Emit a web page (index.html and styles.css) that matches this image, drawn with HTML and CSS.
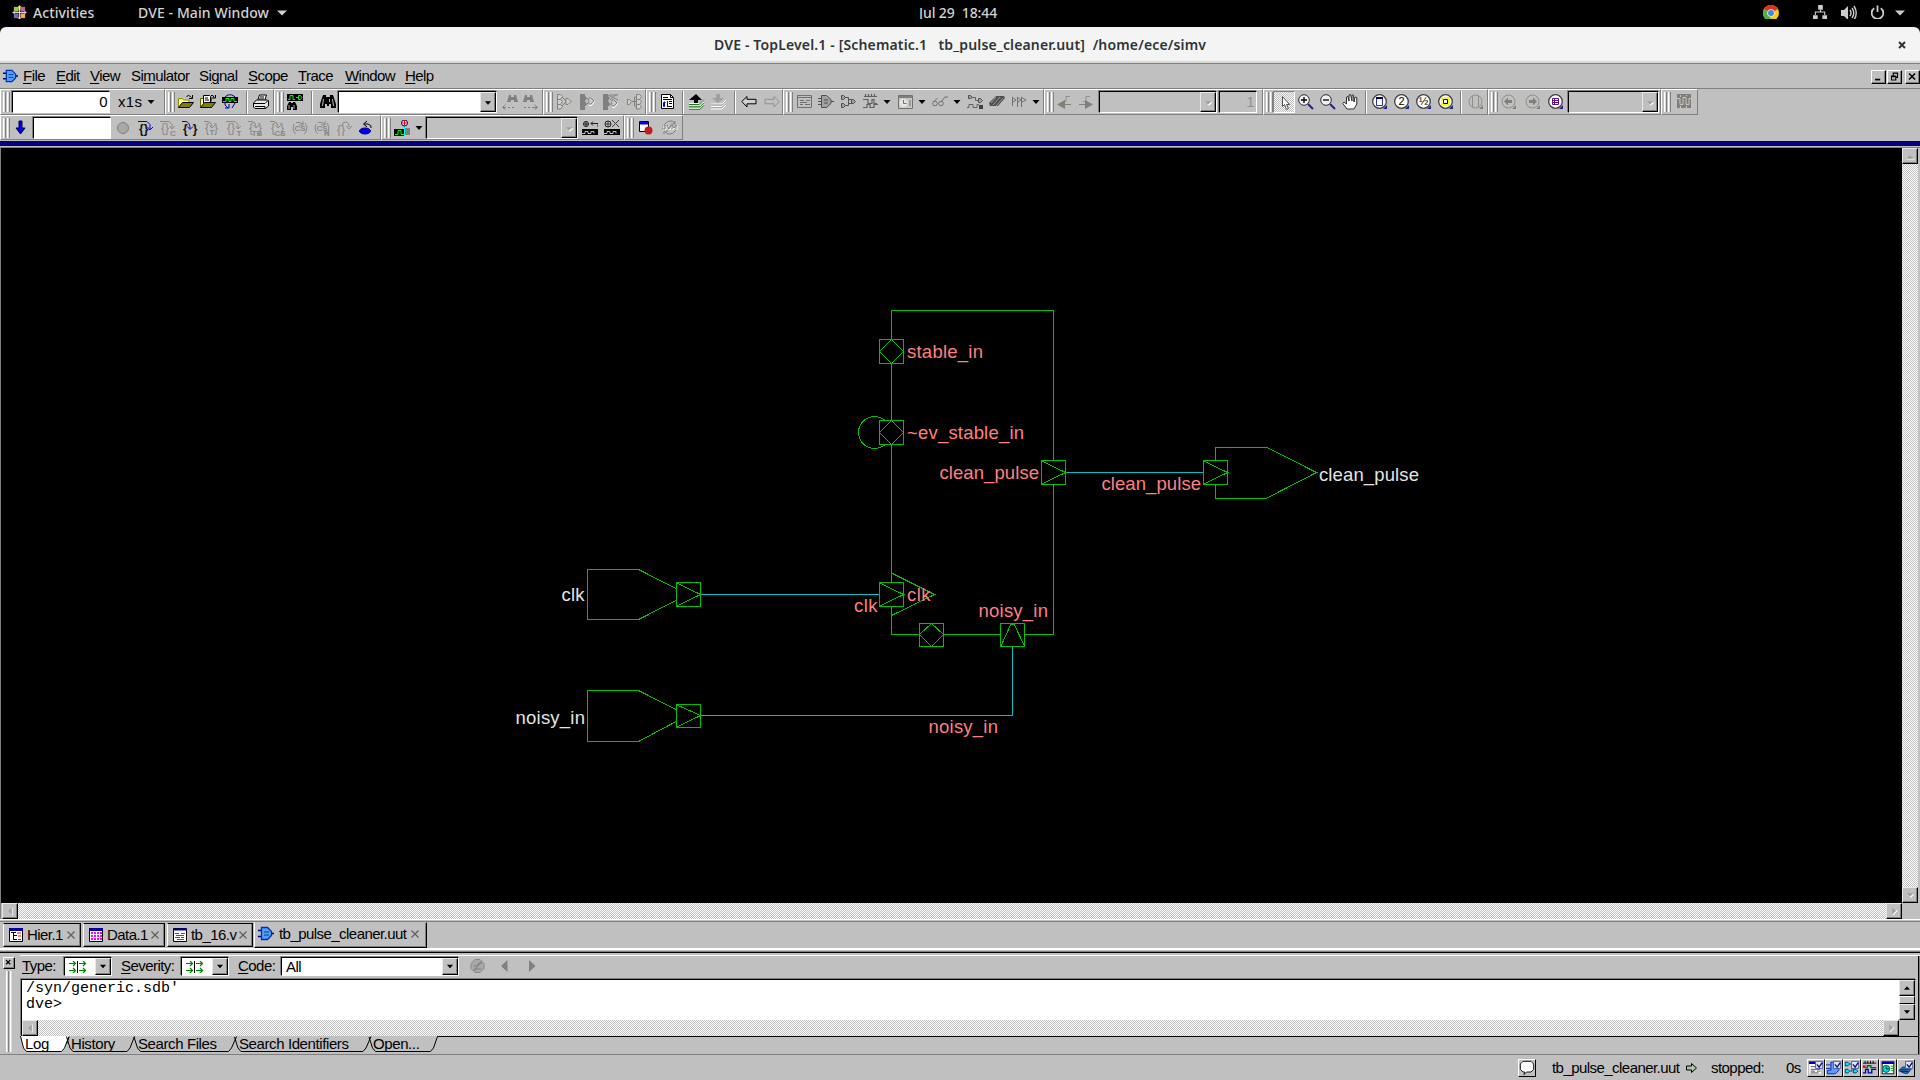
FILE: index.html
```html
<!DOCTYPE html>
<html lang="en">
<head>
<meta charset="utf-8">
<title>DVE - TopLevel.1</title>
<link rel="stylesheet" href="styles.css">
</head>
<body>
<svg class="sprite" aria-hidden="true">
  <defs>
    <symbol id="dve" viewBox="0 0 16 16"><path d="M0 4.5h4M0 10.5h4M12 7.5h4" stroke="#000090" stroke-width="1.6"/><path d="M3.5 1.5h6l4 4v4l-4 4h-6z" fill="#50a0ff" stroke="#0030a8" stroke-width="1.3"/><path d="M6 6h5M6 9h5" stroke="#004080"/></symbol>
    <symbol id="down" viewBox="0 0 16 16"><path d="M4.5 6h7L8 10z" fill="#000"/></symbol>
    <symbol id="down-off" viewBox="0 0 16 16"><path d="M5 7h8l-4 4z" fill="#fff"/><path d="M4 6h8l-4 4z" fill="#a0a0a0"/></symbol>
    <symbol id="up" viewBox="0 0 16 16"><path d="M4.5 10h7L8 6z" fill="#000"/></symbol>
    <symbol id="up-off" viewBox="0 0 16 16"><path d="M4 11h9v1H4z" fill="#fff"/><path d="M4 11h8L8 7z" fill="#a0a0a0"/></symbol>
    <symbol id="left-off" viewBox="0 0 16 16"><path d="M10 4h1v9h-1z" fill="#fff"/><path d="M10 4v8L6 8z" fill="#a0a0a0"/></symbol>
    <symbol id="right-off" viewBox="0 0 16 16"><path d="M7 13l5-5-1-1-4 4z" fill="#fff"/><path d="M6 4v8l4-4z" fill="#a0a0a0"/></symbol>

    <symbol id="open" viewBox="0 0 16 16"><path d="M.5 13.500V4.500h4l1 1.500h5.500v2" fill="#ffffa0" stroke="#909000"/><path d="M.5 13.500L4.500 8.500H15.500L11.500 13.500z" fill="#808000" stroke="#000"/><path d="M8.500 2.500q2-2 4 0l1 1M14.500 1v3.500H11" fill="none" stroke="#000"/></symbol>
    <symbol id="openfile" viewBox="0 0 16 16"><path d="M.5 13.500V4.500h3v-3h6l2 2v4" fill="#ffffa0" stroke="#606000"/><path d="M3.500 9V1.500h6l1 1V8" fill="#fff" stroke="#000"/><path d="M5 4h3M5 6h4" stroke="#000"/><path d="M.5 13.500L4.500 8.500H15.500L11.500 13.500z" fill="#808000" stroke="#000"/><path d="M11 1.500h2l1 2M15.500 1v3H12" fill="none" stroke="#000"/></symbol>
    <symbol id="wavereload" viewBox="0 0 16 16"><path d="M0 3h16v6H0z"/><path d="M1 7.500h3v-3h3v3h2v-3h3v3h3" fill="none" stroke="#0f0"/><path d="M3 3q4-4 9-1l2 2M3 8v3l3 3M3 14h4v-4M13 9l-3 5" fill="none" stroke="#000090"/></symbol>
    <symbol id="print" viewBox="0 0 16 16"><path d="M4.500 7l2-6h7l-2 6z" fill="#fff" stroke="#000"/><path d="M7 3h4M6 5h5" stroke="#000"/><path d="M.5 9l3-3h11l1 1v5l-3 2.500H2L.5 13z" fill="#e8e8e8" stroke="#000"/><path d="M1 9.500h11l3-3M2 12.500h10v2" fill="none" stroke="#000"/></symbol>
    <symbol id="findwave" viewBox="0 0 16 16"><path d="M0 0h16v7H0z"/><path d="M1 5.500h2v-4h3v4h2M9 3.500h2M11.500 1.500h2l1.500 2-1.500 2h-2z" fill="none" stroke="#0f0"/><path d="M2 8h2v1h2V8h2l2 4v4H6v-3H4v3H0v-4z"/><path d="M2 11v4M7 11v4" stroke="#aaa"/></symbol>
    <symbol id="binoc" viewBox="0 0 16 16"><path d="M3 1h3v2h4V1h3l3 9v4h-5v-4H9v2H7v-2H5v4H0v-4z"/><path d="M3.500 5l-1 7M9.500 5v3M12.500 5l1 7" stroke="#bbb" fill="none"/></symbol>
    <symbol id="findprev" viewBox="0 0 16 16"><path d="M7 1h2v2h3V1h2l2 7h-4V6H9v2H5z" fill="#808080"/><path d="M1 13.500h3M6 13.500h2M10 13.500h2M3.500 10.500l-3 3 3 2" fill="none" stroke="#808080"/></symbol>
    <symbol id="findnext" viewBox="0 0 16 16"><path d="M3 1h2v2h3V1h2l2 7H8V6H5v2H1z" fill="#808080"/><path d="M2 13.500h2M6 13.500h2M10 13.500h5M12.500 10.500l3 3-3 2" fill="none" stroke="#808080"/></symbol>
    <symbol id="tree1" viewBox="0 0 16 16"><path d="M1.500.5h3l2 2-2 3h-3zM1.500 5.500h3l2 2-2 3h-3zM1.500 10.500h3l2 2-2 2.500h-3zM10 4.500h2l3 3-3 3h-2z" fill="#d4d0c8" stroke="#808080"/><path d="M6 3l4 4M6 12l4-4M15 7.500h1" stroke="#808080"/></symbol>
    <symbol id="tree2" viewBox="0 0 16 16"><path d="M0 0h5v2l2 2-2 3 2 3-2 2v4H0z" fill="#808080"/><path d="M9.500 4.500h2l3 3-3 4h-2z" fill="#c8c8c8" stroke="#fff"/><path d="M9 4h2l3 3-3 3H9zM5 3l4 3M5 12l4-4" stroke="#808080" fill="none"/></symbol>
    <symbol id="tree3" viewBox="0 0 16 16"><path d="M0 0h5v2l2 2-2 3 2 3-2 2v4H0z" fill="#808080"/><path d="M9.500 6.500h2l3 3-3 4h-2z" fill="#c8c8c8" stroke="#fff"/><path d="M9 6h2l3 3-3 3H9zM5 12l4-3M5 1l10 5M14 0L7 6M7 1h8" stroke="#808080" fill="none"/></symbol>
    <symbol id="tree4" viewBox="0 0 16 16"><path d="M1.500 5.500h2l2 2-2 3h-2zM10.500.5h3l2 2-2 3h-3zM10.500 5.500h3l2 2-2 3h-3zM10.500 10.500h3l2 2-2 2.500h-3z" fill="#d4d0c8" stroke="#808080"/><path d="M6 7.500h5M8.500 7V3h2M8.500 7v5h2" stroke="#808080" fill="none"/></symbol>
    <symbol id="src" viewBox="0 0 16 16"><path d="M.5.5h9l3 3v11H.5z" fill="#fff" stroke="#000"/><path d="M9.500.5v3h3M2 3.500h5M2 5.500h9M6 12.500h5M8 9.500h3M8 7.500h3" fill="none" stroke="#000"/><path d="M3.500 7.500v5h-1v-4h2M6.500 7v6" fill="none" stroke="#0000e0"/></symbol>
    <symbol id="stackup" viewBox="0 0 16 16"><path d="M7 0l6 6H9v5H5V6H0z"/><path d="M0 9.500h11l4-4M0 12h11l4-4M0 14.500h11l4-4" fill="none" stroke="#fff"/><path d="M0 10.500h10l5-5M0 12.800h11l4-4M0 15.300h11l4-4" fill="none" stroke="#207820"/></symbol>
    <symbol id="stackdn" viewBox="0 0 16 16"><path d="M5 0h4v4h4L7 9 1 4h4z" fill="#a0a0a0"/><path d="M0 10h11l4-4M0 12.500h11l4-4M0 15h11l4-4" fill="none" stroke="#fff"/><path d="M0 11h11l4-4M0 13.500h11l4-4" fill="none" stroke="#a8a8a8"/></symbol>
    <symbol id="back" viewBox="0 0 16 16"><path d="M.8 7.500L6 2.500v2.800h9v4.500H6v3.200z" fill="#d0d0d0" stroke="#000"/></symbol>
    <symbol id="fwd" viewBox="0 0 16 16"><path d="M15.200 7.500L10 2.500v2.800H1v4.500h9v3.200z" fill="none" stroke="#909090"/></symbol>
    <symbol id="list" viewBox="0 0 16 16"><path d="M.5 1.500h14v12H.5zM1 3.500h13M3 6.500h4M9 6.500h4M3 8.500h7M3 10.500h3M8 10.500h5" fill="none" stroke="#707070"/></symbol>
    <symbol id="gate" viewBox="0 0 16 16"><path d="M0 4.500h4M0 7.500h3M0 10.500h4M12 7.500h4" stroke="#505050"/><path d="M3.500 1.500h5l4.500 4v4l-4.500 4h-5z" fill="#a0a0a0" stroke="#505050"/><path d="M6 6h4M6 9h4" stroke="#505050"/></symbol>
    <symbol id="path" viewBox="0 0 16 16"><path d="M1.500 1.500h2l2 2-2 2h-2zM1.500 9.500h2l2 2-2 2h-2zM11.500 5.500h2l2 2-2 2h-2z" fill="#a0a0a0" stroke="#505050"/><path d="M5 3.500h3.500v8H5M8.500 5.500h3M8.500 9.500h3" fill="none" stroke="#505050"/></symbol>
    <symbol id="wave" viewBox="0 0 16 16"><path d="M1 2.500h13M2.500 0v2M5.500 0v2M8.500 0v2M11.500 0v2M0 5.500h5v4h4v-4h2v4h3M0 13.500h4v-3h3v3h4v-3h4" fill="none" stroke="#606060" stroke-width="1.200"/></symbol>
    <symbol id="timer" viewBox="0 0 16 16"><path d="M.5 1.500h14v13H.5z" fill="#c8c8c8" stroke="#707070"/><path d="M1 3h13" stroke="#808080" stroke-width="2"/><circle cx="5.500" cy="9" r="4" fill="#e8e4e0"/><path d="M5.500 6v3.500h3M11 7h2M11 9h2M11 11h2" fill="none" stroke="#707070"/></symbol>
    <symbol id="glasses" viewBox="0 0 16 16"><path d="M1.500 8l4-4M9 8l4-5h3" fill="none" stroke="#707070"/><circle cx="3" cy="9.500" r="2.300" fill="none" stroke="#707070"/><circle cx="9" cy="9.500" r="2.300" fill="none" stroke="#707070"/></symbol>
    <symbol id="pathwave" viewBox="0 0 16 16"><path d="M1.500 1.500h2l2 2-2 1h-2zM11.500 4.500h2l2 2-2 2h-2z" fill="#a0a0a0" stroke="#505050"/><path d="M5 3.500h3.500v3h3M0 13.500h2v-3h4v3h4v-3h2" fill="none" stroke="#606060"/><path d="M12 11h4v4h-4z" fill="#404040"/></symbol>
    <symbol id="chip" viewBox="0 0 16 16"><path d="M0 9l7-7h8l1 2-7 8H1z" fill="#505050"/><path d="M2 9l5-6M4 11l7-8M7 12l7-8" stroke="#989898"/></symbol>
    <symbol id="flags" viewBox="0 0 16 16"><path d="M1.500 3v9M6.500 3v10M10.500 3v10M1 3l4 3-3 2M6 3l4 3-3 2M10 3l5 3-4 2" fill="none" stroke="#707070"/></symbol>
    <symbol id="edgeprev" viewBox="0 0 16 16"><path d="M6 7.500h3V2.500h4" fill="none" stroke="#909090"/><path d="M0 10.500L8 6v9zM8 10h6v1H8z" fill="#808078"/></symbol>
    <symbol id="edgenext" viewBox="0 0 16 16"><path d="M4 7.500h3V2.500h4" fill="none" stroke="#909090"/><path d="M14 10.500L6 6v9zM0 10h6v1H0z" fill="#808078"/></symbol>
    <symbol id="cursor" viewBox="0 0 16 16"><path d="M5.500 1.500v10l2-2 2 5 2-1-2-4h3z" fill="#fff" stroke="#505050"/></symbol>
    <symbol id="zoomin" viewBox="0 0 16 16"><circle cx="6" cy="6" r="5.300" fill="#f0f0f0" stroke="#303030"/><path d="M3 6h6M6 3v6" stroke="#000" stroke-width="1.300"/><path d="M10 10l5 5" stroke="#202090" stroke-width="2"/></symbol>
    <symbol id="zoomout" viewBox="0 0 16 16"><circle cx="6" cy="6" r="5.300" fill="#f0f0f0" stroke="#303030"/><path d="M3 6h6" stroke="#000" stroke-width="1.300"/><path d="M10 10l5 5" stroke="#202090" stroke-width="2"/></symbol>
    <symbol id="hand" viewBox="0 0 16 16"><path d="M5 15L.8 9.500 2 8l2.500 2V3l1.500-.5L7 7V1l1.500-.5L10 7V1l1.500.2L12 8l1-5 1.800.5V10L12 15z" fill="#fff" stroke="#303030"/></symbol>
    <symbol id="lens" viewBox="0 0 16 16"><circle cx="7.500" cy="7.500" r="6.800" fill="#fff" stroke="#404040" stroke-width="1.300"/><path d="M15 11v4h-4z" fill="#202090"/></symbol>
    <symbol id="zfit" viewBox="0 0 16 16"><use href="#lens"/><path d="M4.500 3.500h6v8h-6z" fill="none" stroke="#3030c0"/><path d="M4 4h7" stroke="#000060" stroke-width="2"/></symbol>
    <symbol id="z2" viewBox="0 0 16 16"><use href="#lens"/><text x="7.500" y="11" class="glyph">2</text></symbol>
    <symbol id="zhalf" viewBox="0 0 16 16"><use href="#lens"/><text x="7.500" y="11" class="glyph">½</text></symbol>
    <symbol id="zsel" viewBox="0 0 16 16"><use href="#lens"/><path d="M4.500 4.500h6v6h-6z" fill="#fff" stroke="#ff0" stroke-width="3"/><path d="M5.500 5.500h4v4h-4z" fill="none" stroke="#000"/></symbol>
    <symbol id="zoff" viewBox="0 0 16 16"><circle cx="7.500" cy="7.500" r="6.500" fill="none" stroke="#909088"/><path d="M4.500 2v11M10.500 2v11" stroke="#909088"/><path d="M15 11v4h-4z" fill="#808078"/></symbol>
    <symbol id="zprev" viewBox="0 0 16 16"><circle cx="7.500" cy="7.500" r="6.500" fill="none" stroke="#909088"/><path d="M3 7.500l4-4V6h4v3H7v2.500z" fill="#808078"/><path d="M15 11v4h-4z" fill="#808078"/></symbol>
    <symbol id="znext" viewBox="0 0 16 16"><circle cx="7.500" cy="7.500" r="6.500" fill="none" stroke="#909088"/><path d="M12 7.500l-4-4V6H4v3h4v2.500z" fill="#808078"/><path d="M15 11v4h-4z" fill="#808078"/></symbol>
    <symbol id="zlist" viewBox="0 0 16 16"><use href="#lens"/><path d="M4.500 4.500h6v6h-6zM4 6.500h7M4 8.500h7M6.500 4v7" fill="none" stroke="#601090"/></symbol>
    <symbol id="mesh" viewBox="0 0 16 16"><path d="M1 0h14v14H1z" fill="#808078"/><path d="M1 4.500h3v6h3v-7h3v7h3v-6h2M4.500 1v2M10.500 1v1M4.500 12v2M10.500 12v2" fill="none" stroke="#c8c8c0"/></symbol>

    <symbol id="run" viewBox="0 0 16 16"><path d="M6 1h3v7h3l-4.500 6L3 8h3z" fill="#0000f0" stroke="#000050"/></symbol>
    <symbol id="dot" viewBox="0 0 16 16"><circle cx="7" cy="8" r="5.500" fill="#a8a8a8" stroke="#808080"/></symbol>
    <symbol id="stepover" viewBox="0 0 16 16"><text x="1" y="13" class="brace">{}</text><path d="M0 1.500h9l3 3v5M9.500 7l2.500 3 3-3" fill="none" stroke="#0000f0"/></symbol>
    <symbol id="stepin" viewBox="0 0 16 16"><text x="1" y="13" class="brace wide">{}</text><path d="M0 1.500h4q4 1 4 7M5.500 6.500L8 9.500l3-3" fill="none" stroke="#0000f0"/></symbol>
    <symbol id="stepoff" viewBox="0 0 16 16"><text x="1" y="12" class="brace off">{}</text><path d="M0 1.500h9l3 3v4M9.500 6l2.500 3 3-3" fill="none" stroke="#888"/></symbol>
    <symbol id="stepinoff" viewBox="0 0 16 16"><text x="1" y="12" class="brace off wide">{}</text><path d="M0 1.500h4q4 1 4 5M5.500 5L8 8l3-3" fill="none" stroke="#888"/></symbol>
    <symbol id="stepcs" viewBox="0 0 16 16"><text x="8" y="11" class="tag">CS</text><path d="M2 4l-1 4 1 4 2 2M13 3l2 4-1 5-2 2M4 2.500h4l3 2M11 1v4H7" fill="none" stroke="#888"/></symbol>
    <symbol id="stepout" viewBox="0 0 16 16"><text x="1" y="14" class="brace off">{}</text><path d="M6 6q0-4 4-4 3 0 3 5M10.500 6l2.500 3 3-3" fill="none" stroke="#888"/></symbol>
    <symbol id="rewind" viewBox="0 0 16 16"><ellipse cx="7" cy="11" rx="5.500" ry="3" fill="#0000f0" stroke="#000080"/><path d="M6 4h4q4 1 3 4M9 1L5.500 4 9 7" fill="none" stroke="#000"/></symbol>
    <symbol id="addwave" viewBox="0 0 16 16"><path d="M0 9h10v7H0z"/><path d="M1 14.500h3v-4h3v4h3" fill="none" stroke="#0f0"/><path d="M11 8h5v7h-5z" fill="#808080"/><path d="M10.500 5v11" stroke="#0ff"/><circle cx="10.500" cy="3" r="3" fill="#fff" stroke="#000080"/><path d="M7.500 3h6M10.500 0v6" stroke="red"/></symbol>
    <symbol id="markset" viewBox="0 0 16 16"><circle cx="4" cy="4" r="2.500" fill="none" stroke="#202020"/><path d="M1 4h6M4 1v6M16 7V3.500H9M11 1.500L9 3.500l2 2" fill="none" stroke="#202020"/><path d="M0 9h16v6H0z"/><path d="M0 13.500h3v-2h3v2h3v-2h3v2" fill="none" stroke="#c0c0c0"/></symbol>
    <symbol id="markdel" viewBox="0 0 16 16"><circle cx="4" cy="4" r="3" fill="none" stroke="#202020"/><path d="M1 4h6M4 1v6M8 0l7 7M15 0L8 7" fill="none" stroke="#404040"/><path d="M0 9h16v6H0z"/><path d="M0 13.500h3v-2h3v2h3v-2h3v2" fill="none" stroke="#c0c0c0"/></symbol>
    <symbol id="winrec" viewBox="0 0 16 16"><path d="M.5 1.500h9v10h-9z" fill="#fff" stroke="#000"/><path d="M1 3h8" stroke="#00f" stroke-width="3"/><circle cx="9.500" cy="10.500" r="4" fill="#c81820"/></symbol>
    <symbol id="uvm" viewBox="0 0 16 16"><path d="M2 5q3-5 8-4l3 2M13 1v3h-4M14 10q-3 5-8 4l-3-2M2 14v-3h4" fill="none" stroke="#808080"/><path d="M1 6v4h3V6M6 6l2 4 2-4M11 10V6l2 3 2-3v4" fill="none" stroke="#fff"/><path d="M0 5v4h3V5M5 5l2 4 2-4M10 9V5l2 3 2-3v4" fill="none" stroke="#808080"/></symbol>

    <symbol id="hier" viewBox="0 0 16 16"><path d="M1.500 1.500h13v13h-13z" fill="#fff" stroke="#000"/><path d="M1 2.500h14" stroke="#0000a0" stroke-width="3"/><path d="M3 5.500h5M5.500 6v7M5 8.500h4M5 12.500h4" fill="none" stroke="#000"/><path d="M9 6h4M10 9h3M10 12.500h3" stroke="red"/></symbol>
    <symbol id="data" viewBox="0 0 16 16"><path d="M1.500 1.500h13v13h-13z" fill="#fff" stroke="#000"/><path d="M1 2.500h14" stroke="#0000a0" stroke-width="3"/><path d="M4 5v9M7 5v9M10 5v9M13 5v9" stroke="#f0f" stroke-width="2" stroke-dasharray="2 1"/></symbol>
    <symbol id="code" viewBox="0 0 16 16"><path d="M1.500 1.500h13v13h-13z" fill="#fff" stroke="#000"/><path d="M1 2.500h14" stroke="#0000a0" stroke-width="2"/><path d="M3 6.500h4M9 6.500h4M4 8.500h8M3 10.500h5M9 10.500h3M5 12.500h7" stroke="#555"/></symbol>
    <symbol id="filter" viewBox="0 0 20 12"><path d="M1 2.500h7M1 9.500h7M5 0l2.500 2.500L5 5M5 7l2.500 2.500L5 12M11 2.500h7M11 9.500h7M15 0l2.500 2.500L15 5M15 7l2.500 2.500L15 12" fill="none" stroke="#008000" stroke-width="1.200"/><path d="M9.500 0v12" stroke="#000"/></symbol>
    <symbol id="ban" viewBox="0 0 16 16"><path d="M5 1.500h5l4 4v5l-4 4H5l-4-4v-5z" fill="#a8a8a8" stroke="#888"/><path d="M4 8h3l2-3h3M4 11h7M4 13L11 4" fill="none" stroke="#808080"/></symbol>

    <symbol id="bubble" viewBox="0 0 18 18"><path d="M4.500 1.500h9l3 3v6l-3 3h-5l-3 3 1-3h-2l-3-3v-6z" fill="#fff" stroke="#000"/></symbol>
    <symbol id="tick" viewBox="0 0 18 18"><path d="M8.500 1.500h8v8h-8z" fill="#e0e4ff" stroke="#4850a0"/><path d="M10 5l2.500 3L16 3" fill="none" stroke="#101060" stroke-width="1.500"/></symbol>
    <symbol id="s1" viewBox="0 0 18 18"><path d="M1.500 2.500h13v13h-13z" fill="#fff"/><path d="M1 3h9" stroke="#0000b0" stroke-width="3"/><path d="M3 7.500h5M3 10.500h11M3 12.500h5M10 12.500h4M3 14.500h9" stroke="#444"/><use href="#tick"/></symbol>
    <symbol id="s2" viewBox="0 0 18 18"><path d="M5.500 2.500h4l5 4v5l-4 4h-9v-4h4z" fill="#50a0ff" stroke="#0020a0"/><path d="M0 5.500h5M0 9.500h5" stroke="#0020a0"/><use href="#tick"/></symbol>
    <symbol id="s3" viewBox="0 0 18 18"><path d="M1.500 2.500h3l2 2-2 2h-3zM1.500 10.500h3l2 2-2 2h-3zM10.500 10.500h3l2 2-2 2h-3z" fill="#0ee" stroke="#003080"/><path d="M7 4.500h2v8H7" fill="none" stroke="#003080"/><use href="#tick"/></symbol>
    <symbol id="s4" viewBox="0 0 18 18"><path d="M1 3.500h15M3.500 1v3M6.500 1v3M9.500 1v3M12.500 1v3" stroke="#000"/><path d="M1 6h3v3H1z" fill="red"/><path d="M4 8.500h2v-2h4v2h6" fill="none" stroke="#007000" stroke-width="1.500"/><path d="M1 14.500h3v-4h3v4h4v-4h5" fill="none" stroke="#0000c0" stroke-width="1.500"/></symbol>
    <symbol id="s5" viewBox="0 0 18 18"><path d="M2.500 2.500h13v13h-13z" fill="#fff" stroke="#000"/><path d="M2 3h14" stroke="#0000b0" stroke-width="3"/><circle cx="7" cy="10" r="4" fill="#0dd" stroke="#005050"/><path d="M7 7.500V10h3" fill="none" stroke="#000"/><path d="M12 7h3M12 9.500h3M12 12h3" stroke="#080"/></symbol>
    <symbol id="s6" viewBox="0 0 18 18"><path d="M1 12l4-4h5l1 2h4l-4 5H7z" fill="#2878b0" stroke="#003070"/><path d="M2 11h9M3 13h9" stroke="#0a1850"/><use href="#tick"/></symbol>
  </defs>
</svg>

<header class="topbar">
  <svg class="distro" viewBox="0 0 16 16"><path d="M8 0l2 2-2 5-2-5z" fill="#b8d060"/><path d="M2 2h5v5H2z" fill="#9cc850"/><path d="M9 2h5v5H9z" fill="#c060a8"/><path d="M2 9h5v5H2z" fill="#7868b0"/><path d="M9 9h5v5H9z" fill="#f0b040"/><path d="M0 8l3-2.500V10zM16 8l-3-2.500V10zM8 16l-2.500-3h5z" fill="#b090c0"/><path d="M8 1v14M1 8h14" stroke="#e8e0e8"/></svg>
  <span class="activities">Activities</span>
  <span class="appname">DVE - Main Window</span>
  <svg class="caret" viewBox="0 0 10 6"><path d="M0 .5h10L5 5.500z" fill="#d0d0d0"/></svg>
  <span class="clock">Jul 29&nbsp; 18:44</span>
  <span class="tray">
    <svg class="t-chrome" viewBox="0 0 16 16"><circle cx="8" cy="8" r="8" fill="#fc0"/><path d="M8 8L1 4a8 8 0 0 1 14 0z" fill="#e03020"/><path d="M8 8L1 4a8 8 0 0 0 6 12z" fill="#50b040"/><circle cx="8" cy="8" r="3.800" fill="#eee"/><circle cx="8" cy="8" r="3" fill="#4088e0"/></svg>
    <svg class="t-net" viewBox="0 0 16 16"><path d="M5.500 0h5v5h-5zM0 11h5v5H0zM10 11h5v5h-5z" fill="#ccc"/><path d="M8 5v3M2.500 11V7.500h10V11" fill="none" stroke="#ccc" stroke-width="1.200"/></svg>
    <svg class="t-vol" viewBox="0 0 16 16"><path d="M0 5h3l4-4v14l-4-4H0z" fill="#ccc"/><path d="M9 5q2 3 0 6M11 3q3.500 5 0 10M13 1q4.500 7 0 14" fill="none" stroke="#ccc" stroke-width="1.400"/></svg>
    <svg class="t-pow" viewBox="0 0 16 16"><path d="M4.500 3A6.200 6.200 0 1 0 11.500 3M8 0v7" fill="none" stroke="#ccc" stroke-width="1.900"/></svg>
    <svg class="caret" viewBox="0 0 10 6"><path d="M0 .5h10L5 5.500z" fill="#ccc"/></svg>
  </span>
</header>

<div class="titlebar">
  <span class="title">DVE - TopLevel.1 - [Schematic.1&nbsp;&nbsp; tb_pulse_cleaner.uut]&nbsp; /home/ece/simv</span>
  <svg class="close" viewBox="0 0 8 8"><path d="M1 1l6 6M7 1L1 7" stroke="#2e3436" stroke-width="2"/></svg>
</div>

<nav class="menubar">
  <svg class="i16"><use href="#dve"/></svg>
  <span><u>F</u>ile</span><span><u>E</u>dit</span><span><u>V</u>iew</span><span>Si<u>m</u>ulator</span><span>Si<u>g</u>nal</span><span><u>S</u>cope</span><span><u>T</u>race</span><span><u>W</u>indow</span><span><u>H</u>elp</span>
  <div class="mdi">
    <svg class="raised" viewBox="0 0 14 14"><path d="M3 9h6v2H3z"/></svg>
    <svg class="raised" viewBox="0 0 14 14"><path d="M5.500 6V2.500h5v5H8M3.500 6.500h5v4h-5zM3 6h6" fill="none" stroke="#000" stroke-width="1.300"/></svg>
    <svg class="raised last" viewBox="0 0 14 14"><path d="M3 3l7 7M10 3l-7 7" stroke="#000" stroke-width="1.700"/></svg>
  </div>
</nav>

<div class="tools row1">
  <div class="group g-a"><i class="grip"></i><span class="field white">0</span><span class="unit">x1s</span><svg class="i16 arr"><use href="#down"/></svg></div>
  <div class="group g-b"><i class="grip"></i><svg class="i16"><use href="#open"/></svg><svg class="i16"><use href="#openfile"/></svg><svg class="i16"><use href="#wavereload"/></svg><i class="sep"></i><svg class="i16"><use href="#print"/></svg></div>
  <div class="group g-c"><i class="grip"></i><svg class="i16"><use href="#findwave"/></svg><i class="sep"></i><svg class="i16"><use href="#binoc"/></svg><span class="combo white"><svg class="btn"><use href="#down"/></svg></span><svg class="i16"><use href="#findprev"/></svg><svg class="i16"><use href="#findnext"/></svg></div>
  <div class="group g-d"><i class="grip"></i><svg class="i16"><use href="#tree1"/></svg><svg class="i16"><use href="#tree2"/></svg><svg class="i16"><use href="#tree3"/></svg><svg class="i16"><use href="#tree4"/></svg></div>
  <div class="group g-e"><i class="grip"></i><svg class="i16"><use href="#src"/></svg><i class="sep"></i><svg class="i16"><use href="#stackup"/></svg><svg class="i16"><use href="#stackdn"/></svg><i class="sep"></i><svg class="i16"><use href="#back"/></svg><svg class="i16"><use href="#fwd"/></svg></div>
  <div class="group g-f"><i class="grip"></i><svg class="i16"><use href="#list"/></svg><svg class="i16"><use href="#gate"/></svg><svg class="i16"><use href="#path"/></svg><svg class="i16"><use href="#wave"/></svg><svg class="i16 arr"><use href="#down"/></svg><svg class="i16"><use href="#timer"/></svg><svg class="i16 arr"><use href="#down"/></svg><svg class="i16"><use href="#glasses"/></svg><svg class="i16 arr"><use href="#down"/></svg><svg class="i16"><use href="#pathwave"/></svg><svg class="i16"><use href="#chip"/></svg><svg class="i16"><use href="#flags"/></svg><svg class="i16 arr"><use href="#down"/></svg></div>
  <div class="group g-g"><i class="grip"></i><svg class="i16"><use href="#edgeprev"/></svg><svg class="i16"><use href="#edgenext"/></svg><span class="combo"><svg class="btn"><use href="#down-off"/></svg></span><span class="field">1</span></div>
  <div class="group g-h"><i class="grip"></i><span class="pressed"><svg class="i16"><use href="#cursor"/></svg></span><svg class="i16"><use href="#zoomin"/></svg><svg class="i16"><use href="#zoomout"/></svg><svg class="i16"><use href="#hand"/></svg><i class="sep"></i><svg class="i16"><use href="#zfit"/></svg><svg class="i16"><use href="#z2"/></svg><svg class="i16"><use href="#zhalf"/></svg><svg class="i16"><use href="#zsel"/></svg><i class="sep"></i><svg class="i16"><use href="#zoff"/></svg></div>
  <div class="group g-i"><i class="grip"></i><svg class="i16"><use href="#zprev"/></svg><svg class="i16"><use href="#znext"/></svg><svg class="i16"><use href="#zlist"/></svg><span class="combo"><svg class="btn"><use href="#down-off"/></svg></span></div>
  <div class="group g-j"><i class="grip"></i><svg class="i16"><use href="#mesh"/></svg></div>
</div>
<div class="tools row2">
  <div class="group g-k"><i class="grip"></i><svg class="i16"><use href="#run"/></svg><span class="field white"></span><svg class="i16"><use href="#dot"/></svg><svg class="i16"><use href="#stepover"/></svg><svg class="i16"><use href="#stepoff"/><text x="13" y="16" class="tag">C</text></svg><svg class="i16"><use href="#stepin"/></svg><svg class="i16"><use href="#stepinoff"/><text x="8" y="15" class="tag">T</text></svg><svg class="i16"><use href="#stepoff"/><text x="13" y="16" class="tag">T</text></svg><svg class="i16"><use href="#stepinoff"/><text x="9" y="16" class="tag">TB</text></svg><svg class="i16"><use href="#stepinoff"/><text x="10" y="16" class="tag">CS</text></svg><svg class="i16"><use href="#stepcs"/></svg><svg class="i16"><use href="#stepcs"/><text x="13" y="16" class="tag">N</text></svg><svg class="i16"><use href="#stepout"/></svg><svg class="i16"><use href="#rewind"/></svg></div>
  <div class="group g-l"><i class="grip"></i><svg class="i16"><use href="#addwave"/></svg><svg class="i16 arr"><use href="#down"/></svg><span class="combo"><svg class="btn"><use href="#down-off"/></svg></span><svg class="i16"><use href="#markset"/></svg><svg class="i16"><use href="#markdel"/></svg></div>
  <div class="group g-m"><i class="grip"></i><svg class="i16"><use href="#winrec"/></svg><svg class="i16"><use href="#uvm"/></svg></div>
</div>
<div class="activeline"></div>

<main class="view">
  <div class="viewrow">
    <svg class="schematic" viewBox="1 148 1901 755">
      <g class="net">
        <path d="M700 594.500H880M1066 472.500H1204M700 715.500H1012.500V646"/>
      </g>
      <g class="sym">
        <path d="M891.500 310.500H1053.500V634.500H891.500z"/>
        <path d="M891.500 573L934.500 594.500L891.500 615.500"/>
        <circle cx="874.500" cy="432.500" r="16"/>
        <path d="M676.500 588.700L638.500 569.500H587.500V619.500H638.500L676.500 600.300"/>
        <path d="M676.500 709.700L638.500 690.500H587.500V741.500H638.500L676.500 721.300"/>
        <path d="M1215.500 461V447.500H1267L1316.500 472.500L1266 498.500H1215.500V484"/>
      </g>
      <g class="sym pin">
        <path d="M879.500 339.500h24v24h-24z"/><path d="M891.500 339.500l12 12-12 12-12-12z"/>
        <path d="M879.500 420.500h24v24h-24z"/><path d="M891.500 420.500l12 12-12 12-12-12z"/>
        <path d="M919.500 623.500h24v23h-24z"/><path d="M931.500 623.500l12 11-12 12-12-12z"/>
        <path d="M1000.500 623.500h24v23h-24z"/><path d="M1001 646l10-22h3l10.500 22"/>
        <path d="M1041.500 460.500h24v24h-24z"/><path d="M1042 461l23.500 11.500L1042 484"/>
        <path d="M1203.500 460.500h24v24h-24z"/><path d="M1204 461l23.500 11.500L1204 484"/>
        <path d="M879.500 582.500h24v24h-24z"/><path d="M880 583l23.500 11.500L880 606"/>
        <path d="M676.500 582.500h24v24h-24z"/><path d="M677 583l23.500 11.500L677 606"/>
        <path d="M676.500 704.500h24v23h-24z"/><path d="M677 705l23.500 10.500L677 727"/>
      </g>
      <g class="lbl">
        <text x="907" y="358" textLength="76">stable_in</text>
        <text x="907" y="439" textLength="117">~ev_stable_in</text>
        <text x="939.500" y="479" textLength="99.500">clean_pulse</text>
        <text x="1101.500" y="490" textLength="99.500">clean_pulse</text>
        <text x="907" y="601" textLength="23.500">clk</text>
        <text x="854" y="612" textLength="23.500">clk</text>
        <text x="978.500" y="617" textLength="69.500">noisy_in</text>
        <text x="928.500" y="733" textLength="69.500">noisy_in</text>
      </g>
      <g class="lbl port">
        <text x="1319" y="481" textLength="100">clean_pulse</text>
        <text x="561.500" y="601" textLength="23">clk</text>
        <text x="515.500" y="724" textLength="69.500">noisy_in</text>
      </g>
    </svg>
    <div class="vscroll"><svg class="btn"><use href="#up-off"/></svg><svg class="btn"><use href="#down-off"/></svg></div>
  </div>
  <div class="hscroll"><svg class="btn"><use href="#left-off"/></svg><svg class="btn"><use href="#right-off"/></svg></div>
</main>

<div class="wintabs">
  <div class="wtab w1"><svg class="i16"><use href="#hier"/></svg><span>Hier.1</span><svg class="x" viewBox="0 0 8 8"><path d="M.5.5l7 7M7.500.5l-7 7" stroke="#606060" stroke-width="1.300"/></svg></div>
  <div class="wtab w2"><svg class="i16"><use href="#data"/></svg><span>Data.1</span><svg class="x" viewBox="0 0 8 8"><path d="M.5.5l7 7M7.500.5l-7 7" stroke="#606060" stroke-width="1.300"/></svg></div>
  <div class="wtab w3"><svg class="i16"><use href="#code"/></svg><span>tb_16.v</span><svg class="x" viewBox="0 0 8 8"><path d="M.5.5l7 7M7.500.5l-7 7" stroke="#606060" stroke-width="1.300"/></svg></div>
  <div class="wtab w4"><svg class="i16"><use href="#dve"/></svg><span>tb_pulse_cleaner.uut</span><svg class="x" viewBox="0 0 8 8"><path d="M.5.5l7 7M7.500.5l-7 7" stroke="#606060" stroke-width="1.300"/></svg></div>
</div>

<section class="console">
  <div class="dock">
    <svg class="raised" viewBox="0 0 12 12"><path d="M2.500 2.500l5 5M7.500 2.500l-5 5" stroke="#000" stroke-width="1.500"/></svg>
    <i class="grip"></i>
  </div>
  <div class="panel">
    <div class="filters">
      <label><u>T</u>ype:</label><span class="combo white"><svg class="filt"><use href="#filter"/></svg><svg class="btn"><use href="#down"/></svg></span>
      <label><u>S</u>everity:</label><span class="combo white"><svg class="filt"><use href="#filter"/></svg><svg class="btn"><use href="#down"/></svg></span>
      <label><u>C</u>ode:</label><span class="combo white"><span class="val">All</span><svg class="btn"><use href="#down"/></svg></span>
      <svg class="i16 nav"><use href="#ban"/></svg>
      <svg class="i16 nav" viewBox="0 0 16 16"><path d="M10.500 2v12L4 8z" fill="#808080"/></svg>
      <svg class="i16 nav" viewBox="0 0 16 16"><path d="M5 2v12l6.500-6z" fill="#808080"/></svg>
    </div>
    <div class="log">
      <div class="logtop">
        <pre>/syn/generic.sdb'
dve&gt;</pre>
        <div class="logscroll"><svg class="btn"><use href="#up"/></svg><i class="thumb"></i><svg class="btn"><use href="#down"/></svg></div>
      </div>
      <div class="hscroll"><svg class="btn"><use href="#left-off"/></svg><svg class="btn"><use href="#right-off"/></svg></div>
    </div>
    <div class="logtabs">
      <svg class="edges" viewBox="20 1036 1900 16">
        <path d="M20 1036l3 12 3 3h36l3-3 4-12z" fill="#fff"/>
        <path d="M20.500 1036l3 12 3 3.500h35l3-3.500 4.500-11.500 M69 1037l-2.500 7M66.500 1036.500l3.500 11.500 3 3.500h54l3-3.500 4.500-11.500M134 1037l3.500 11 3 3.500h88l3-3.500 5-11.500M234.500 1037l3.500 11 3 3.500h122l3-3.500 5-11.500M369 1037l3.500 11 3 3.500h55l3-3.500 4-11.500H1918" fill="none" stroke="#000"/>
      </svg>
      <span>Log</span><span>History</span><span>Search Files</span><span>Search Identifiers</span><span>Open...</span>
    </div>
  </div>
</section>

<footer class="status">
  <svg class="sbtn bub" viewBox="0 0 18 18"><use href="#bubble"/></svg>
  <span class="scope">tb_pulse_cleaner.uut</span>
  <svg class="i16 go" viewBox="0 0 16 16"><path d="M2.500 6h5V3.500L12.500 8 7.500 12.500V10h-5z" fill="#a8c8a8" stroke="#000"/></svg>
  <span class="state">stopped:</span>
  <span class="time">0s</span>
  <div class="sicons"><svg class="sbtn"><use href="#s1"/></svg><svg class="sbtn"><use href="#s2"/></svg><svg class="sbtn"><use href="#s3"/></svg><svg class="sbtn"><use href="#s4"/></svg><svg class="sbtn"><use href="#s5"/></svg><svg class="sbtn"><use href="#s6"/></svg></div>
</footer>
</body>
</html>
```
FILE: styles.css
```css
* { box-sizing: border-box; }
body {
  margin: 0; width: 1920px; height: 1080px; overflow: hidden;
  display: flex; flex-direction: column;
  background: #c0c0c0; color: #000;
  font: 15px/20px "Liberation Sans", Arial, sans-serif;
  letter-spacing: -0.55px;
}
svg { display: block; flex: none; }
i { display: block; }
u { text-decoration-thickness: 1px; text-underline-offset: 2px; }
.sprite { position: absolute; width: 0; height: 0; }
.i16 { width: 16px; height: 16px; overflow: visible; }
.glyph { font: 11px "Liberation Sans", sans-serif; letter-spacing: 0; text-anchor: middle; }
.brace { font: bold 12px "Liberation Sans", sans-serif; letter-spacing: 0; fill: #101010; }
.brace.wide { letter-spacing: 5px; }
.brace.off { fill: #888; font-weight: normal; }
.tag { font: bold 8px "Liberation Sans", sans-serif; letter-spacing: 0; text-anchor: middle; fill: #888; }

/* desktop bar */
.topbar {
  height: 27px; flex: none; background: #000; color: #d2d2d2;
  display: grid; grid-template-columns: 21px 105px 139px 642px auto 1fr;
  align-items: center; padding: 0 15px 2px 12px;
  font: 500 14px/25px "Noto Sans", "Open Sans", sans-serif; letter-spacing: 0.1px;
}
.clock { letter-spacing: -0.1px; }
.distro { width: 15px; height: 15px; }
.caret { width: 10px; height: 6px; }
.tray { display: grid; grid-template-columns: 50px 28px 29px 25px 10px; justify-content: end; align-items: center; }
.t-chrome, .t-vol, .t-pow { width: 16px; height: 16px; }
.t-net { width: 15px; height: 15px; }
.t-pow { width: 15px; }

.titlebar {
  height: 36px; flex: none; background: #f4f4f4; border-radius: 6px 6px 0 0; box-shadow: 0 -8px 0 #000;
  border-bottom: 2px solid #d8d8d4;
  display: grid; grid-template-columns: 1fr auto 1fr; align-items: center;
  color: #2e3436; font: 600 14px/32px "Noto Sans", "Open Sans", sans-serif; letter-spacing: 0.15px;
  padding-top: 2px;
}
.title { grid-column: 2; }
.close { width: 8px; height: 8px; justify-self: end; margin-right: 14px; }

/* menus */
.menubar {
  height: 25px; flex: none; border-top: 1px solid #808080;
  display: grid; grid-template-columns: 20px 33px 34px 41px 68px 49px 50px 47px 60px 50px 1fr;
  align-items: center; padding: 0 0 0 3px;
}
.menubar > .i16 { width: 15px; height: 15px; }
.mdi { display: flex; justify-content: flex-end; gap: 1px; margin-bottom: -1px; }
.raised {
  width: 15px; height: 14px; background: #c0c0c0;
  border: 1px solid; border-color: #fff #000 #000 #fff; box-shadow: inset -1px -1px 0 #808080;
}
.raised.last { margin-left: 2px; }

/* toolbars */
.tools { display: flex; flex: none; }
.row1 { height: 27px; border-top: 1px solid #808080; }
.row2 { height: 25px; }
.group {
  display: grid; align-items: center; flex: none; height: 100%;
  border: 1px solid; border-color: #fff #808080 #808080 #fff;
}
.grip {
  width: 7px; height: 20px; margin-left: 2px;
  background: linear-gradient(90deg, #fff 0 1px, #d8d8d8 0 2px, #808080 0 3px, #c0c0c0 0 4px, #fff 0 5px, #d8d8d8 0 6px, #808080 0);
}
.sep { width: 2px; height: 23px; background: linear-gradient(90deg, #808080 50%, #fff 0); }
.field, .combo {
  height: 22px; background: #c0c0c0; border: 1px solid; border-color: #000 #fff #fff #000;
  box-shadow: -1px -1px 0 #808080; display: flex; align-items: center; justify-content: flex-end;
}
.field { width: 98px; padding-right: 2px; color: #909090; }
.white { background: #fff; color: #000; }
.btn {
  width: 16px; height: 16px; background: #c0c0c0; overflow: hidden;
  border: 1px solid; border-color: #e8e8e8 #000 #000 #e8e8e8; box-shadow: inset -1px -1px 0 #808080;
}
.combo .btn { height: 20px; padding-top: 2px; }
.unit { letter-spacing: 0.3px; }
.arr { margin-left: -4px; }
.pressed {
  width: 22px; height: 22px; padding: 3px 0 0 3px; border: 1px solid; border-color: #808080 #fff #fff #808080;
  background: repeating-conic-gradient(#f4f4f4 0 25%, #c0c0c0 0 50%) 0 0 / 2px 2px;
}
.g-a { width: 165px; grid-template-columns: 11px 106px 29px 1fr; }
.g-b { width: 109px; grid-template-columns: 12px 22px 22px 24px 7px 1fr; }
.g-c { width: 269px; grid-template-columns: 12px 24px 9px 18px 164px 20px 1fr; }
.g-c .combo { width: 159px; }
.g-d { width: 103px; grid-template-columns: 12px 24px 23px 23px 1fr; }
.g-e { width: 137px; grid-template-columns: 14px 21px 7px 22px 23px 7px 23px 1fr; }
.g-f { width: 261px; grid-template-columns: 13px 21px 22px 23px 20px 15px 20px 14px 21px 14px 22px 22px 21px 1fr; }
.g-g { width: 219px; grid-template-columns: 12px 22px 20px 120px 1fr; }
.g-g .combo { width: 118px; }
.g-g .field { width: 38px; }
.g-h { width: 225px; grid-template-columns: 9px 25px 22px 22px 23px 7px 22px 22px 22px 22px 8px 1fr; }
.g-i { width: 173px; grid-template-columns: 12px 24px 23px 20px 1fr; }
.g-i .combo { width: 91px; }
.g-j { width: 37px; grid-template-columns: 14px 1fr; }
.g-k { width: 381px; grid-template-columns: 12px 20px 83px 22px 22px 22px 22px 22px 22px 22px 22px 22px 22px 22px 1fr; }
.g-k .field { width: 78px; }
.g-l { width: 243px; grid-template-columns: 12px 21px 11px 156px 22px 1fr; }
.g-l .combo { width: 152px; }
.g-m { width: 59px; grid-template-columns: 14px 23px 1fr; }
.activeline { height: 8px; flex: none; border-top: 1px solid #c0c0c0; border-bottom: 1px solid #808080; background: linear-gradient(#000080 0 5px, #c0c0c0 0); }

/* schematic */
.view { flex: none; height: 772px; padding: 0 2px 0 1px; box-shadow: inset 1px 0 0 #808080; border-bottom: 1px solid #fff; margin-bottom: 1px; }
.viewrow { display: flex; height: 755px; }
.schematic { width: 1901px; height: 755px; background: #000; shape-rendering: crispEdges; }
.net path { fill: none; stroke: #00c0c0; }
.sym path, .sym circle { fill: none; stroke: #00c000; }
.pin path:nth-child(odd) { fill: #000; }
.lbl text { font: 18.500px "Liberation Sans", Arial, sans-serif; letter-spacing: 0; fill: #ff8080; }
.lbl.port text { fill: #e4e4e4; }
.vscroll, .hscroll { background: repeating-conic-gradient(#fff 0 25%, #c0c0c0 0 50%) 0 0 / 2px 2px; display: flex; justify-content: space-between; }
.vscroll { flex-direction: column; width: 16px; }
.hscroll { height: 16px; }
.view .hscroll { margin-left: 1px; width: 1900px; }

/* window tabs */
.wintabs { display: flex; flex: none; height: 27px; padding-left: 3px; border-top: 1px solid #808080; }
.wtab {
  height: 24px; margin-top: 1px; display: grid; align-items: center; margin-right: 2px;
  grid-template-columns: 19px 1fr 8px; padding: 0 5px 0 4px;
  border: 1px solid; border-color: #000 #000 #000 #fff; box-shadow: inset -1px -1px 0 #808080;
}
.wtab .x { width: 8px; height: 8px; }
.w1 { width: 78px; }
.w2 { width: 82px; }
.w3 { width: 86px; margin-right: 1px; }
.w4 { width: 173px; height: 26px; border-color: #c0c0c0 #000 #000 #fff; margin-top: 0; grid-template-columns: 21px 1fr 10px; padding: 0 5px 3px 3px; }

/* console */
.console {
  flex: none; height: 107px; display: flex; border-top: 2px solid #fff;
  border-bottom: 1px solid #808080;
}
.dock { width: 20px; margin-top: 1px; padding: 5px 0 0 3px; border-top: 1px solid #808080; box-shadow: inset 0 1px 0 #000; }
.dock .raised { width: 12px; height: 12px; }
.dock .grip { width: 6px; height: 81px; margin: 2px 0 0 3px; }
.panel { width: 1900px; margin-top: 1px; padding-top: 4px; border-top: 1px solid #808080; box-shadow: inset 0 1px 0 #000, inset 0 3px 0 #c0c0c0, inset 0 4px 0 #fff, inset -1px 0 0 #808080, inset -2px 0 0 #000; }
.filters { display: grid; grid-template-columns: 43px 56px 61px 56px 44px 188px 27px 27px 1fr; align-items: start; height: 23px; padding-left: 2px; }
.filters .combo { width: 48px; height: 19px; margin-top: 1px; justify-content: space-between; margin-left: -1px; }
.filters .combo:nth-child(6) { width: 178px; }
.filters .btn { height: 17px; padding-top: 0; }
.filt { width: 20px; height: 12px; margin-left: 3px; }
.val { padding-left: 4px; }
.nav { margin-top: 2px; }
.log { width: 1895px; height: 57px; margin-left: 1px; border: 1px solid; border-color: #000 #c0c0c0 #c0c0c0 #000; border-bottom: 0; box-shadow: -1px -1px 0 #808080; background: #c0c0c0; }
.logtop { display: flex; height: 40px; background: #fff; }
pre { margin: 0; flex: 1; padding: 1px 0 0 4px; font: 15px/16px "Liberation Mono", "Courier New", monospace; letter-spacing: 0; }
.logscroll { width: 16px; background: #c0c0c0; }
.thumb { height: 8px; background: #c0c0c0; border: 1px solid; border-color: #fff #000 #000 #fff; }
.log .hscroll { width: 1877px; }
.logtabs { height: 16px; display: grid; grid-template-columns: 46px 67px 101px 134px 1fr; padding-left: 5px; position: relative; line-height: 15px; letter-spacing: -0.4px; }
.logtabs span { position: relative; }
.edges { position: absolute; left: 0; top: 0; width: 1900px; height: 16px; }

/* status bar */
.status { flex: none; height: 25px; display: grid; grid-template-columns: 34px 132px 27px 75px 21px 1fr; align-items: center; padding-left: 1518px; padding-top: 1px; }
.sicons { display: flex; }
.sbtn { width: 18px; height: 18px; border: 1px solid; border-color: #fff #000 #000 #fff; overflow: hidden; }
```
